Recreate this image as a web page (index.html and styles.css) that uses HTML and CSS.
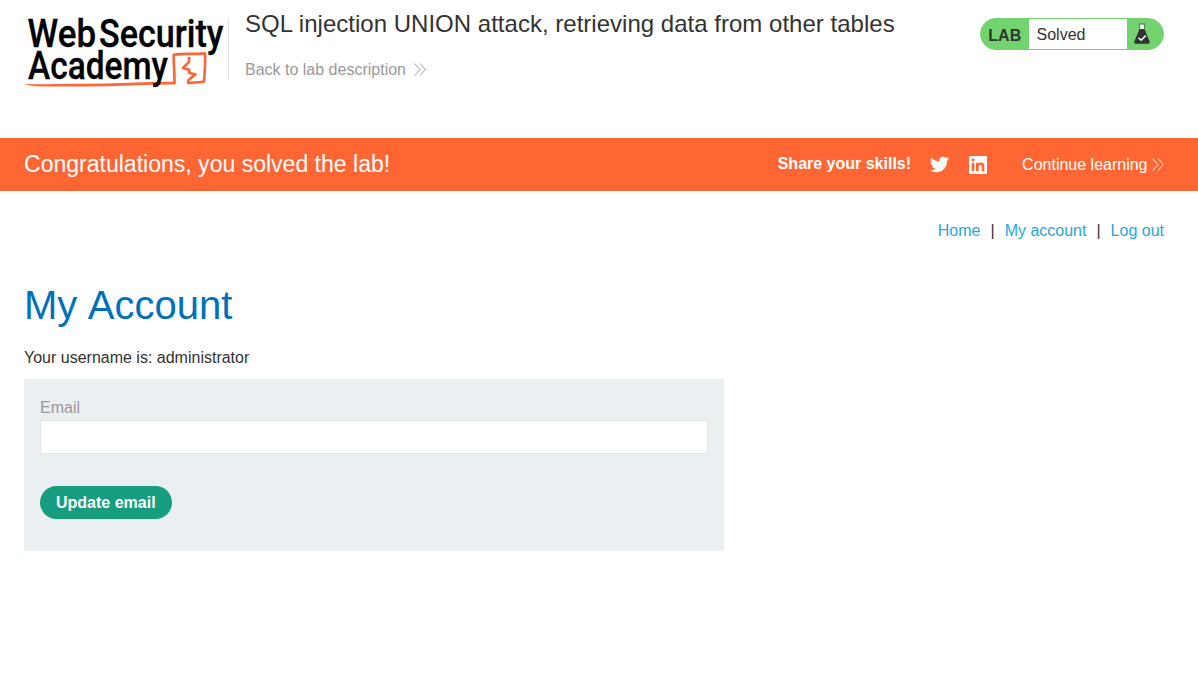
FILE: index.html
```html
<!DOCTYPE html>
<html lang="en">
<head>
<meta charset="utf-8">
<title>SQL injection UNION attack, retrieving data from other tables</title>
<link rel="stylesheet" href="styles.css">
</head>
<body>
<header class="lab-header">
  <svg class="logo" viewBox="0 0 204 80" role="img" aria-label="Web Security Academy">
    <path class="logo-fill" d="M0 74.200 C12 74.600 30 74 60 73.800 S120 72 151 71.800 L151 74.400 C120 74.400 90 76.600 60 76.500 S12 77.500 0 74.200Z"/>
    <path class="logo-line" d="M150.500 74 C150.600 64 149.600 54 149.700 44.700 C160 43 171 44.600 181 43.400 C181.600 53 180.500 64 180 71.500 C174 72.900 169 72.300 164 73 L164.300 70.300 L171.500 64.200 L165.200 62.900 L165.200 59.700 L159 58 L165 51.800 L165.200 47"/>
    <g class="logo-text">
      <text x="3.500" y="37" textLength="68.500" lengthAdjust="spacingAndGlyphs">Web</text>
      <text x="75" y="37" textLength="124.500" lengthAdjust="spacingAndGlyphs">Security</text>
      <text x="4" y="69.300" textLength="140" lengthAdjust="spacingAndGlyphs">Academy</text>
    </g>
  </svg>
  <div class="title-block">
    <h2>SQL injection UNION attack, retrieving data from other tables</h2>
    <a class="back">Back to lab description
      <svg class="chevrons" viewBox="0 0 12 13"><path d="M.6 .5 6 6.500.6 12.500M6 .5l5.400 6L6 12.500"/></svg>
    </a>
  </div>
  <div class="status">
    <span class="status-label">LAB</span>
    <span class="status-value">Solved</span>
    <svg class="flask" viewBox="0 0 18 22">
      <path class="flask-neck" d="M6.700 1.500h4.500V7h-4.500z"/>
      <path class="flask-body" d="M6.500 6h5l5.100 12.500q.6 2.300-1.300 2.300H2.600q-1.900 0-1.300-2.300z"/>
      <path class="flask-rim" d="M5.700 1h6.500M6.500 1.500V6M11.400 1.500V6"/>
      <path class="flask-tick" d="M5.500 14.800l2.700 2.500 4.500-4.800"/>
    </svg>
  </div>
</header>

<section class="banner">
  <h4>Congratulations, you solved the lab!</h4>
  <span class="share">Share your skills!</span>
  <svg class="twitter" viewBox="0 0 24 24"><path d="M23.950 4.570a10 10 0 0 1-2.820.770 4.960 4.960 0 0 0 2.160-2.720c-.950.560-2 .960-3.130 1.180a4.920 4.920 0 0 0-8.380 4.480C7.690 8.090 4.070 6.130 1.640 3.160a4.920 4.920 0 0 0 1.520 6.570 4.900 4.900 0 0 1-2.230-.610v.060a4.920 4.920 0 0 0 3.950 4.830 5 5 0 0 1-2.210.080 4.940 4.940 0 0 0 4.600 3.420A9.870 9.870 0 0 1 0 19.540a13.990 13.990 0 0 0 7.550 2.210c9.050 0 14-7.500 14-13.990 0-.210 0-.420-.020-.630a9.940 9.940 0 0 0 2.460-2.550z"/></svg>
  <svg class="linkedin" viewBox="0 0 24 24"><path fill-rule="evenodd" d="M1.800 0h20.400Q24 0 24 1.800v20.400q0 1.800-1.800 1.800H1.800Q0 24 0 22.200V1.800Q0 0 1.800 0zM3.600 9v11.400h3.500V9zM5.340 3.300a2.060 2.060 0 1 0 .01 0zM9.350 9v11.400h3.560v-5.600c0-1.500.3-2.900 2.100-2.900s1.880 1.700 1.880 3v5.500h3.560v-6.300c0-3.100-.7-5.400-4.270-5.400-1.700 0-2.860.9-3.370 1.850h-.05V9z"/></svg>
  <a class="continue">Continue learning
    <svg class="chevrons" viewBox="0 0 12 13"><path d="M.6 .5 6 6.500.6 12.500M6 .5l5.400 6L6 12.500"/></svg>
  </a>
</section>

<main>
  <nav class="links"><a>Home</a><span>|</span><a>My account</a><span>|</span><a>Log out</a></nav>
  <h1>My Account</h1>
  <p class="username">Your username is: administrator</p>
  <form class="login-form">
    <label for="email">Email</label>
    <input id="email" type="email">
    <button type="button">Update email</button>
  </form>
</main>
</body>
</html>
```
FILE: styles.css
```css
* { box-sizing: border-box; }

body {
  margin: 0;
  background: #fff;
  color: #333332;
  font: 16px/18px "Liberation Sans", Arial, sans-serif;
}

h1, h2, h4, p { margin: 0; font-weight: 400; }

svg { display: block; flex: none; }

.lab-header {
  display: flex;
  align-items: flex-start;
  height: 138px;
  padding: 10px 34px 0 24px;
}

.logo { width: 204px; height: 80px; overflow: visible; }
.logo-text { font: 500 38px Roboto, sans-serif; fill: #000; stroke: #000; stroke-width: .3; }
.logo-fill { fill: #ff6633; }
.logo-line { fill: none; stroke: #ff6633; stroke-width: 2.6; stroke-linejoin: round; }

.title-block {
  flex: 1;
  height: 62px;
  margin-top: 8px;
  padding-left: 16px;
  border-left: 1px solid #e0e0e0;
}

.title-block h2 { margin-top: -8px; font-size: 24px; line-height: 28px; letter-spacing: .015px; white-space: nowrap; }

.back { display: flex; align-items: center; gap: 8.500px; margin-top: 23px; color: #999; }

.chevrons { width: 12px; height: 13px; margin-bottom: 2px; fill: none; stroke: currentColor; stroke-width: .9; }

.status {
  display: flex;
  align-items: center;
  width: 184px;
  height: 32px;
  margin-top: 8px;
  border: 1px solid #72d36f;
  border-radius: 16px;
  background: #72d36f;
}

.status-label { width: 48px; padding: 3px 0 0 7.300px; font-weight: 700; }
.status-value { width: 98px; height: 30px; padding-left: 7.500px; background: #fff; line-height: 31px; }
.flask { width: 18px; height: 22px; margin-left: 6px; }
.flask-neck { fill: #fff; }
.flask-body { fill: #333332; }
.flask-rim { fill: none; stroke: #333332; stroke-width: .6; }
.flask-tick { fill: none; stroke: #fff; stroke-width: 1.4; }

.banner {
  display: flex;
  align-items: center;
  height: 53px;
  padding: 0 34px 0 24px;
  background: #ff6633;
  color: #fff;
}

.banner h4 { flex: 1; padding-bottom: 1px; font-size: 23.040px; line-height: 28px; }
.share { margin-right: 19px; padding-bottom: 2px; font-weight: 700; }
.twitter { width: 19px; height: 19px; margin-right: 20px; fill: #fff; }
.linkedin { width: 18px; height: 18px; margin-right: 35px; fill: #fff; }
.continue { display: flex; align-items: center; gap: 4.500px; }
.continue .chevrons { margin-bottom: 1px; }

main { padding: 31px 34px 0 24px; }

.links { display: flex; justify-content: flex-end; gap: 10px; color: #333332; }
.links a { color: #29a7de; }
.links span { color: #333332; }

h1 { margin-top: 42px; color: #0071b8; font-size: 40px; line-height: 46px; word-spacing: 1.500px; }
.username { margin-top: 21px; }

.login-form {
  display: flex;
  flex-direction: column;
  align-items: flex-start;
  width: 700px;
  height: 172px;
  margin-top: 12px;
  padding: 20px 16px 32px;
  background: #eaeff2;
}

.login-form label { color: #999; }
.login-form input { width: 100%; height: 34px; margin: 3px 0 32px; border: 1px solid #e4e4e4; background: #fff; }
.login-form button {
  height: 33px;
  padding: 0 16px;
  border: 0;
  border-radius: 17px;
  background: #169c7f;
  color: #fff;
  font: 700 16px/33px "Liberation Sans", Arial, sans-serif;
}
```
